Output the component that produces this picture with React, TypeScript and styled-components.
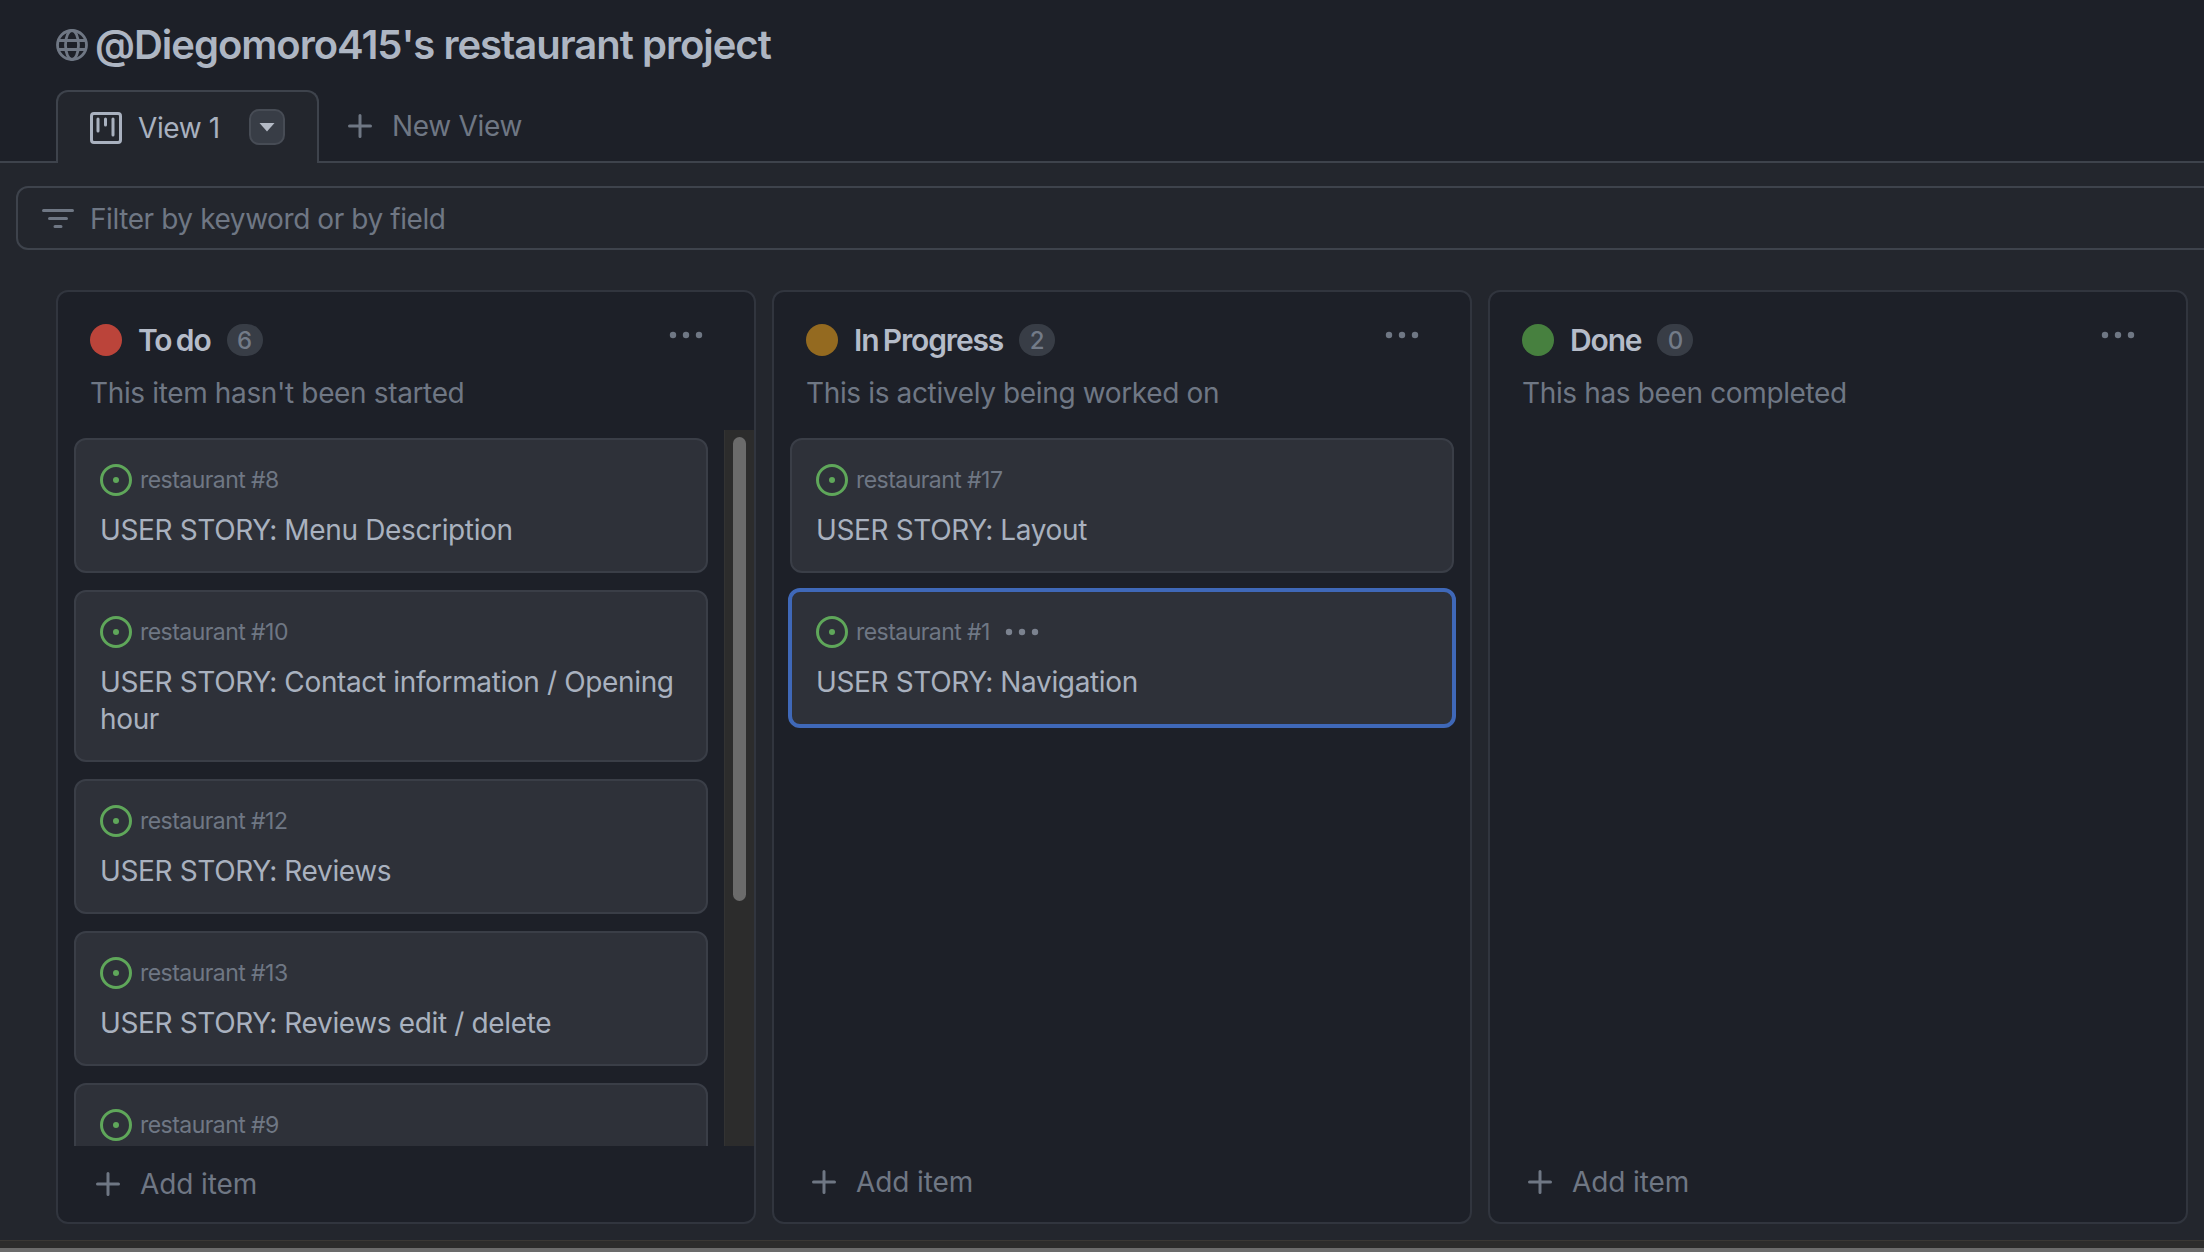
import React from "react";
import styled, { createGlobalStyle } from "styled-components";

const Global = createGlobalStyle`
  html, body { margin: 0; padding: 0; background: #23262d; }
  body { font-family: Inter, "Liberation Sans", sans-serif; overflow: hidden; }
`;

const Page = styled.div`
  width: 2204px; height: 1252px; overflow: hidden;
  display: flex; flex-direction: column; background: #23262d;
`;
const Header = styled.header`
  height: 161px; flex: none; background: #1d2028;
  border-bottom: 2px solid #3e434c; box-sizing: content-box;
  display: flex; flex-direction: column; padding-left: 56px;
`;
const TitleRow = styled.div`
  height: 90px; flex: none; display: flex; align-items: center; gap: 7px;
  color: #6f7784;
`;
const Title = styled.h1`
  margin: 0; font-size: 40px; font-weight: 600; letter-spacing: -1px;
  color: #aeb6c3; line-height: 48px;
`;
const Tabs = styled.div`display: flex; align-items: stretch; height: 71px;`;
const ActiveTab = styled.div`
  width: 263px; height: 73px; box-sizing: border-box; background: #23262d;
  border: 2px solid #3e434c; border-bottom: none; border-radius: 12px 12px 0 0;
  display: flex; align-items: center; padding: 0 0 0 32px; gap: 16px;
  color: #a9b1bf; font-size: 28px; letter-spacing: -0.4px;
`;
const TabName = styled.span`width: 95px; white-space: nowrap;`;
const CaretButton = styled.span`
  width: 36px; height: 36px; box-sizing: border-box; border-radius: 10px; background: #383d46;
  border: 2px solid #474c55; display: flex; align-items: center; justify-content: center;
  color: #b4bac5; margin-bottom: 2px;
`;
const NewTab = styled.div`
  display: flex; align-items: center; gap: 20px; padding: 0 0 0 29px; height: 71px;
  color: #6f7784; font-size: 28px; letter-spacing: -0.3px; box-sizing: border-box;
`;
const FilterBar = styled.div`
  flex: none; margin: 23px 0 0 16px; width: 2300px; height: 64px; box-sizing: border-box;
  border: 2px solid #3e434c; border-radius: 12px; display: flex; align-items: center;
  padding: 1px 0 0 24px; gap: 16px; color: #6f7784; font-size: 28px; letter-spacing: -0.42px;
`;
const Board = styled.main`
  flex: 1; min-height: 0; display: flex; gap: 16px; padding: 40px 0 16px 56px;
`;
const Column = styled.section`
  width: 700px; flex: none; box-sizing: border-box; background: #1d2028;
  border: 2px solid #31353e; border-radius: 12px; display: flex; flex-direction: column;
`;
const ColHead = styled.div`
  height: 138px; flex: none; box-sizing: border-box; padding: 32px 51px 0 32px;
  display: flex; flex-direction: column; gap: 19px;
`;
const ColTitleRow = styled.div`display: flex; align-items: center; height: 32px; color: #6f7784;`;
const Dot = styled.span<{ $c: string }>`
  width: 32px; height: 32px; border-radius: 50%; background: ${p => p.$c}; flex: none;
`;
const ColName = styled.h2`
  margin: 0 0 0 16px; font-size: 30px; font-weight: 600; letter-spacing: -1.15px; word-spacing: -2px;
  color: #b5bcc9; line-height: 32px;
`;
const Count = styled.span`
  margin-left: 16px; width: 36px; height: 32px; border-radius: 16px; background: #383d46;
  display: flex; align-items: center; justify-content: center; font-size: 24px; font-weight: 500; color: #737b88;
`;
const More = styled.span`margin-left: auto; display: flex; margin-top: -10px;`;
const Desc = styled.p`margin: 0; font-size: 28px; letter-spacing: -0.36px; color: #6f7784; line-height: 36px; white-space: nowrap;`;
const Scroller = styled.div`
  flex: 1; min-height: 0; display: flex; overflow: hidden;
  padding-left: 16px;
`;
const CardList = styled.div<{ $wide?: boolean }>`
  width: ${p => (p.$wide ? "664px" : "634px")}; flex: none; display: flex; flex-direction: column; gap: 17px;
  padding-top: 8px; box-sizing: border-box;
`;
const Track = styled.div`
  margin-left: 16px; width: 30px; flex: none; background: #2c2c2c; padding: 7px 8px 0 8px; box-sizing: border-box;
  border-left: 1px solid #333;
`;
const Thumb = styled.div`height: 464px; background: #6b6b6b; border-radius: 7px;`;
const Card = styled.article<{ $sel?: boolean }>`
  flex: none; box-sizing: border-box; background: #2e3139; border-radius: 12px;
  border: ${p => (p.$sel ? "4px solid #3f68b8" : "2px solid #3a3e47")};
  margin: ${p => (p.$sel ? "-2px -2px" : "0")};
  padding: ${p => (p.$sel ? "24px 24px 23px" : "24px 24px 22px")};
`;
const CardMeta = styled.div`
  display: flex; align-items: center; height: 32px; gap: 8px; color: #6f7784;
  font-size: 23px; letter-spacing: -0.55px;
`;
const OpenIcon = styled.svg`color: #5fa75a; flex: none; width: 32px; height: 32px;`;
const CardMore = styled.span`display: flex; margin-left: 7px; color: #7b828f;`;
const CardTitle = styled.div`
  margin-top: 16px; font-size: 28px; line-height: 37px; letter-spacing: -0.36px; color: #a9b1bf;
`;
const AddItem = styled.div<{ $low?: boolean }>`
  height: ${p => (p.$low ? "78px" : "76px")}; flex: none; display: flex; align-items: center; gap: 20px;
  padding: 0 0 ${p => (p.$low ? "3px" : "0")} 38px; box-sizing: border-box; color: #6f7784; font-size: 28px; letter-spacing: -0.1px;
`;
const Spacer = styled.div`flex: 1; min-height: 0;`;
const BottomBar = styled.div`
  flex: none; height: 12px; background: #2c2c2c; box-sizing: border-box; padding-top: 7px;
  border-top: 1px solid #3a3835;
`;
const BottomThumb = styled.div`height: 4px; background: #6b6b6b;`;

const GlobeIcon = () => (
  <svg width="32" height="32" viewBox="0 0 32 32" fill="none" stroke="currentColor" strokeWidth="2.8">
    <circle cx="16" cy="16" r="14.5" />
    <ellipse cx="16" cy="16" rx="6.5" ry="14.5" />
    <path d="M2 11.5h28M2 20.5h28" />
  </svg>
);
const ProjectIcon = () => (
  <svg width="32" height="32" viewBox="0 0 32 32" fill="none" stroke="currentColor" strokeWidth="3" strokeLinecap="round">
    <rect x="1.5" y="1.5" width="29" height="29" rx="2.5" />
    <path d="M8 7v12M15.5 7v6M23 7v16" />
  </svg>
);
const CaretIcon = () => (
  <svg width="16" height="10" viewBox="0 0 16 10" fill="currentColor"><path d="M0.5 1h15L8 9.5z" /></svg>
);
const PlusIcon = () => (
  <svg width="24" height="24" viewBox="0 0 24 24" fill="none" stroke="currentColor" strokeWidth="3" strokeLinecap="round">
    <path d="M12 1.5v21M1.5 12h21" />
  </svg>
);
const FilterIcon = () => (
  <svg width="32" height="24" viewBox="0 0 32 24" fill="none" stroke="currentColor" strokeWidth="3" strokeLinecap="round">
    <path d="M1.5 3.5h29M7.5 11.5h17M13 19.5h6" />
  </svg>
);
const IssueIcon = () => (
  <OpenIcon viewBox="0 0 32 32" fill="none" stroke="currentColor" strokeWidth="3">
    <circle cx="16" cy="16" r="14.5" />
    <circle cx="16" cy="16" r="3" fill="currentColor" stroke="none" />
  </OpenIcon>
);
const DotsIcon = () => (
  <svg width="34" height="8" viewBox="0 0 34 8" fill="currentColor">
    <circle cx="4" cy="4" r="3.2" /><circle cx="17" cy="4" r="3.2" /><circle cx="30" cy="4" r="3.2" />
  </svg>
);

type CardData = { repo: string; title: string; sel?: boolean };
const cols: { name: string; color: string; desc: string; cards: CardData[]; scroll?: boolean }[] = [
  { name: "To do", color: "#bb443a", desc: "This item hasn't been started", scroll: true, cards: [
    { repo: "restaurant #8", title: "USER STORY: Menu Description" },
    { repo: "restaurant #10", title: "USER STORY: Contact information / Opening hour" },
    { repo: "restaurant #12", title: "USER STORY: Reviews" },
    { repo: "restaurant #13", title: "USER STORY: Reviews edit / delete" },
    { repo: "restaurant #9", title: "" },
  ]},
  { name: "In Progress", color: "#946a20", desc: "This is actively being worked on", cards: [
    { repo: "restaurant #17", title: "USER STORY: Layout" },
    { repo: "restaurant #1", title: "USER STORY: Navigation", sel: true },
  ]},
  { name: "Done", color: "#47803f", desc: "This has been completed", cards: [] },
];
const counts = [6, 2, 0];

export default function App() {
  return (
    <Page>
      <Global />
      <Header>
        <TitleRow>
          <GlobeIcon />
          <Title>@Diegomoro415's restaurant project</Title>
        </TitleRow>
        <Tabs>
          <ActiveTab>
            <ProjectIcon />
            <TabName>View 1</TabName>
            <CaretButton><CaretIcon /></CaretButton>
          </ActiveTab>
          <NewTab><PlusIcon />New View</NewTab>
        </Tabs>
      </Header>
      <FilterBar><FilterIcon />Filter by keyword or by field</FilterBar>
      <Board>
        {cols.map((c, i) => (
          <Column key={c.name}>
            <ColHead>
              <ColTitleRow>
                <Dot $c={c.color} />
                <ColName>{c.name}</ColName>
                <Count>{counts[i]}</Count>
                <More><DotsIcon /></More>
              </ColTitleRow>
              <Desc>{c.desc}</Desc>
            </ColHead>
            <Scroller>
              <CardList $wide={!c.scroll}>
                {c.cards.map(card => (
                  <Card key={card.repo} $sel={card.sel}>
                    <CardMeta>
                      <IssueIcon />
                      {card.repo}
                      {card.sel && <CardMore><DotsIcon /></CardMore>}
                    </CardMeta>
                    {card.title && <CardTitle>{card.title}</CardTitle>}
                  </Card>
                ))}
              </CardList>
              {c.scroll && <Track><Thumb /></Track>}
              {!c.scroll && <Spacer />}
            </Scroller>
            <AddItem $low={!c.scroll}><PlusIcon />Add item</AddItem>
          </Column>
        ))}
      </Board>
      <BottomBar><BottomThumb /></BottomBar>
    </Page>
  );
}
